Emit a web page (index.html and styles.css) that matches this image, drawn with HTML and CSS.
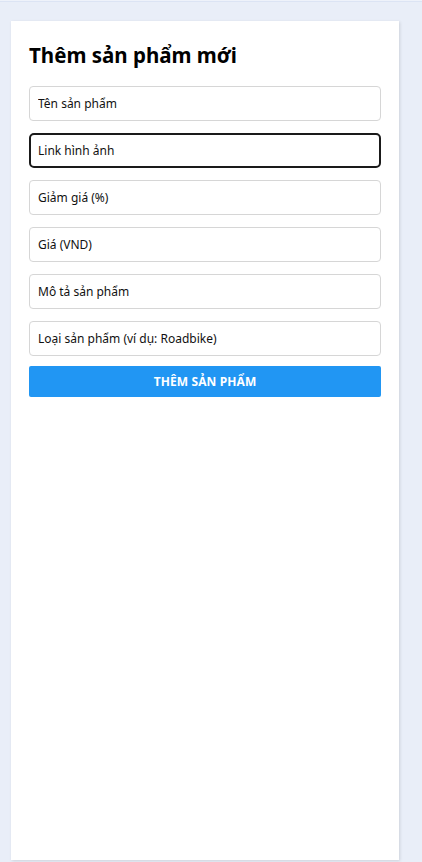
FILE: index.html
```html
<!DOCTYPE html>
<html lang="vi">
<head>
<meta charset="utf-8">
<title>Thêm sản phẩm mới</title>
<link rel="stylesheet" href="styles.css">
</head>
<body>
<div class="topline"></div>
<main class="page">
  <section class="card">
    <h2 class="title">Thêm sản phẩm mới</h2>
    <form class="form">
      <input class="field" type="text" placeholder="Tên sản phẩm">
      <input class="field field-focus" type="text" placeholder="Link hình ảnh">
      <input class="field" type="text" placeholder="Giảm giá (%)">
      <input class="field" type="text" placeholder="Giá (VND)">
      <input class="field" type="text" placeholder="Mô tả sản phẩm">
      <input class="field" type="text" placeholder="Loại sản phẩm (ví dụ: Roadbike)">
      <button class="submit" type="button">THÊM SẢN PHẨM</button>
    </form>
  </section>
</main>
</body>
</html>
```
FILE: styles.css
```css
* { box-sizing: border-box; }
html, body {
  margin: 0;
  padding: 0;
  height: 100%;
  overflow: hidden;
}
body {
  background: #e9eef8;
  font-family: "Noto Sans", "Open Sans", sans-serif;
  color: #000;
}
.topline {
  height: 2px;
  border-top: 1px solid #eef2fa;
  border-bottom: 1px solid #dce4f4;
}
.page {
  padding: 19px 23px 0 11px;
}
.card {
  background: #fff;
  width: 388px;
  height: 839px;
  padding: 18px 18px;
  box-shadow: 1px 1px 3px rgba(0,0,0,0.12);
}
.title {
  margin: 2px 0 16px;
  font-size: 20.5px;
  font-weight: 700;
  line-height: 29px;
}
.form {
  display: flex;
  flex-direction: column;
  gap: 12px;
}
.field {
  display: block;
  width: 100%;
  height: 35px;
  border: 1px solid #d6d6d6;
  border-radius: 4px;
  padding: 0 8px;
  font-family: inherit;
  font-size: 12px;
  color: #000;
  background: #fff;
  outline: none;
}
.field::placeholder { color: #111; }
.field-focus {
  border: 2px solid #1a1a1a;
  border-radius: 5px;
  padding: 0 7px;
}
.submit {
  margin-top: -2px;
  height: 31px;
  width: 100%;
  border: none;
  border-radius: 2px;
  background: #2196f3;
  color: #fff;
  font-family: inherit;
  font-size: 12px;
  font-weight: 700;
  letter-spacing: 0.1px;
}
```
